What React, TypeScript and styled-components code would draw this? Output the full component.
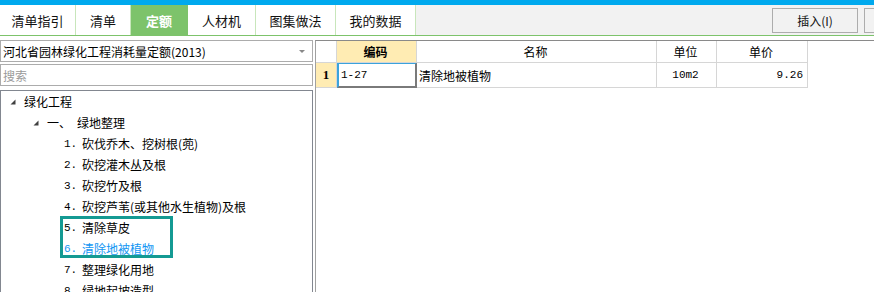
import React from "react";
import styled, { createGlobalStyle } from "styled-components";

const Global = createGlobalStyle`
  html, body { margin: 0; padding: 0; background: #fff; }
  body { font-family: "Noto Sans CJK SC", "Noto Sans", sans-serif; }
  * { box-sizing: border-box; }
`;

const Page = styled.div`
  width: 874px;
  height: 292px;
  overflow: hidden;
  display: flex;
  flex-direction: column;
  background: #fff;
`;

const TopStrip = styled.div`
  height: 5px;
  background: #00a9ee;
  flex: none;
`;

const TabBar = styled.div`
  height: 31px;
  flex: none;
  display: flex;
  align-items: stretch;
  background: #f2f2f2;
  border-bottom: 1px solid #7dc36b;
  overflow: hidden;
`;

const Tab = styled.div<{ $w: number; $active?: boolean }>`
  width: ${(p) => p.$w}px;
  flex: none;
  display: flex;
  align-items: center;
  justify-content: center;
  font-size: 13px;
  background: ${(p) => (p.$active ? "#7dc36b" : "#fff")};
  color: ${(p) => (p.$active ? "#fff" : "#111")};
  font-weight: ${(p) => (p.$active ? 700 : 400)};
  border-right: 1px solid ${(p) => (p.$active ? "#7dc36b" : "#c8e6bb")};
`;

const Buttons = styled.div`
  margin-left: auto;
  display: flex;
  gap: 6px;
  padding-top: 3px;
  margin-right: -76px;
`;

const Button = styled.div`
  width: 86px;
  height: 25px;
  border: 1px solid #adadad;
  background: #f2f2f2;
  display: flex;
  align-items: center;
  justify-content: center;
  font-size: 12px;
  color: #111;
`;

const Body = styled.div`
  flex: 1;
  display: flex;
  gap: 2px;
  padding-top: 4px;
  min-height: 0;
`;

const LeftPanel = styled.div`
  width: 313px;
  flex: none;
  display: flex;
  flex-direction: column;
`;

const Combo = styled.div`
  height: 22px;
  border: 1px solid #acacac;
  display: flex;
  align-items: center;
  padding-left: 2px;
  font-size: 12px;
  color: #000;
`;

const ComboText = styled.span`
  flex: 1;
`;

const ComboArrow = styled.span`
  width: 0;
  height: 0;
  border-left: 3px solid transparent;
  border-right: 3px solid transparent;
  border-top: 3px solid #888;
  margin-right: 7px;
`;

const Search = styled.div`
  height: 22px;
  margin-top: 2px;
  border: 1px solid #acacac;
  display: flex;
  align-items: center;
  padding-left: 2px;
  font-size: 12px;
  color: #9a9a9a;
`;

const Tree = styled.div`
  position: relative;
  margin-top: 4px;
  flex: 1;
  border: 1px solid #828790;
  border-bottom: none;
  overflow: hidden;
`;

const Row = styled.div<{ $indent: number; $active?: boolean }>`
  height: 21px;
  display: flex;
  align-items: center;
  padding-left: ${(p) => p.$indent}px;
  font-size: 12px;
  color: ${(p) => (p.$active ? "#1296f3" : "#000")};
  white-space: nowrap;
`;

const Caret = styled.svg`
  width: 6px;
  height: 6px;
  flex: none;
  margin-right: 8px;
`;

const Num = styled.span`
  width: 18px;
  flex: none;
  font-family: "Liberation Mono", monospace;
  font-size: 11px;
`;

const Prefix = styled.span`
  width: 30px;
  flex: none;
`;

const Highlight = styled.div`
  position: absolute;
  left: 59px;
  top: 125px;
  width: 113px;
  height: 42px;
  border: 3px solid #149a93;
  pointer-events: none;
`;

const RightPanel = styled.div`
  flex: 1;
  border-left: 1px solid #a0a0a0;
  border-top: 1px solid #8a8a8a;
  display: flex;
  flex-direction: column;
`;

const GridRow = styled.div<{ $h: number }>`
  display: flex;
  height: ${(p) => p.$h}px;
  flex: none;
`;

const Cell = styled.div<{
  $w: number;
  $bg?: string;
  $align?: "left" | "center" | "right";
  $bold?: boolean;
  $mono?: boolean;
}>`
  width: ${(p) => p.$w}px;
  flex: none;
  display: flex;
  align-items: center;
  justify-content: ${(p) =>
    p.$align === "left" ? "flex-start" : p.$align === "right" ? "flex-end" : "center"};
  padding: 0 4px 0 2px;
  background: ${(p) => p.$bg || "#fff"};
  border-right: 1px solid #d6d6d6;
  border-bottom: 1px solid #d6d6d6;
  font-size: ${(p) => (p.$mono ? "11px" : "12px")};
  font-family: ${(p) =>
    p.$mono ? '"Liberation Mono", monospace' : '"Noto Sans CJK SC", sans-serif'};
  font-weight: ${(p) => (p.$bold ? 700 : 400)};
  color: #000;
`;

const RowNum = styled(Cell)`
  font-family: "Liberation Serif", serif;
  font-size: 13px;
  padding: 0;
`;

const SelectedCell = styled(Cell)`
  border-left: 2px solid #3ba3dc;
  border-top: 1px solid #3ba3dc;
  border-right: 2px solid #7a7a7a;
  border-bottom: 2px solid #7a7a7a;
`;

const tabs = [
  { label: "清单指引", w: 76 },
  { label: "清单", w: 55 },
  { label: "定额", w: 57, active: true },
  { label: "人材机", w: 68 },
  { label: "图集做法", w: 80 },
  { label: "我的数据", w: 80 },
];

const items = [
  "砍伐乔木、挖树根(蔸)",
  "砍挖灌木丛及根",
  "砍挖竹及根",
  "砍挖芦苇(或其他水生植物)及根",
  "清除草皮",
  "清除地被植物",
  "整理绿化用地",
  "绿地起坡造型",
];

const CaretIcon = () => (
  <Caret viewBox="0 0 6 6">
    <polygon points="5.5,0.5 5.5,5.5 0.5,5.5" fill="#404040" />
  </Caret>
);

export default function App() {
  return (
    <Page>
      <Global />
      <TopStrip />
      <TabBar>
        {tabs.map((t) => (
          <Tab key={t.label} $w={t.w} $active={t.active}>
            {t.label}
          </Tab>
        ))}
        <Buttons>
          <Button>插入(I)</Button>
          <Button />
        </Buttons>
      </TabBar>
      <Body>
        <LeftPanel>
          <Combo>
            <ComboText>河北省园林绿化工程消耗量定额(2013)</ComboText>
            <ComboArrow />
          </Combo>
          <Search>搜索</Search>
          <Tree>
            <Row $indent={9}>
              <CaretIcon />
              绿化工程
            </Row>
            <Row $indent={32}>
              <CaretIcon />
              <Prefix>一、</Prefix>
              绿地整理
            </Row>
            {items.map((it, i) => (
              <Row key={it} $indent={63} $active={i === 5}>
                <Num>{i + 1}.</Num>
                {it}
              </Row>
            ))}
            <Highlight />
          </Tree>
        </LeftPanel>
        <RightPanel>
          <GridRow $h={22}>
            <RowNum $w={21} />
            <Cell $w={80} $bg="#ffecb3" $bold>
              编码
            </Cell>
            <Cell $w={240}>名称</Cell>
            <Cell $w={60}>单位</Cell>
            <Cell $w={91}>单价</Cell>
          </GridRow>
          <GridRow $h={25}>
            <RowNum $w={21} $bg="#ffecb3" $bold>
              1
            </RowNum>
            <SelectedCell $w={80} $align="left" $mono>
              1-27
            </SelectedCell>
            <Cell $w={240} $align="left">
              清除地被植物
            </Cell>
            <Cell $w={60} $mono>
              10m2
            </Cell>
            <Cell $w={91} $align="right" $mono>
              9.26
            </Cell>
          </GridRow>
        </RightPanel>
      </Body>
    </Page>
  );
}
